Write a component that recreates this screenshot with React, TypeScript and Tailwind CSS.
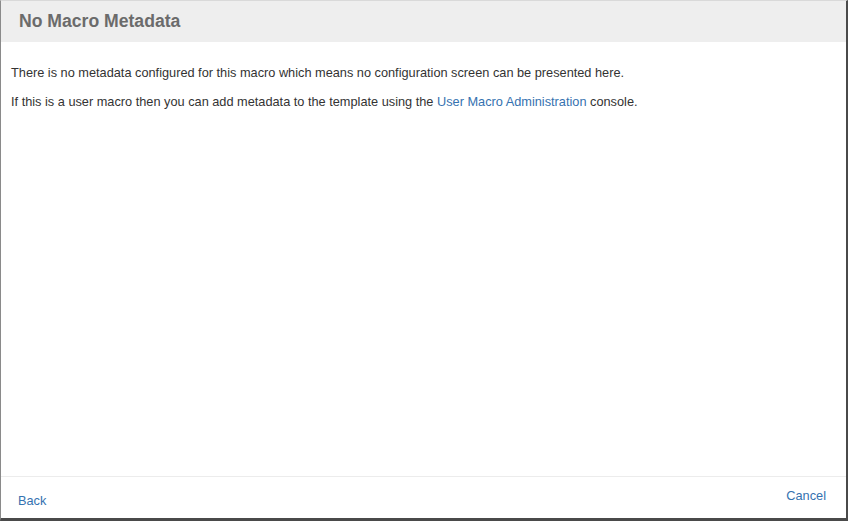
import React from 'react';

const App: React.FC = () => {
  return (
    <div className="w-[848px] h-[521px] bg-white flex flex-col border-t border-t-[#d9d9d9] border-l border-l-[#8a8a8a] border-r-2 border-r-[#4a4a4a] border-b-[3px] border-b-[#4a4a4a] font-['Liberation_Sans',Arial,sans-serif]">
      {/* Header */}
      <div className="h-[41px] shrink-0 bg-[#eeeeee] flex items-center px-[18px]">
        <h2 className="text-[17.6px] font-bold text-[#6b6b6b]">No Macro Metadata</h2>
      </div>

      {/* Body */}
      <div className="flex-1 px-[10px] pt-[23px] text-[12.75px] text-[#333333] leading-[16px]">
        <p>There is no metadata configured for this macro which means no configuration screen can be presented here.</p>
        <p className="mt-[13px]">
          If this is a user macro then you can add metadata to the template using the{' '}
          <a href="#" className="text-[#3572b0]">User Macro Administration</a> console.
        </p>
      </div>

      {/* Footer */}
      <div className="h-[42px] shrink-0 border-t border-t-[#ececec] flex justify-between pl-[17px] pr-[20px] text-[12.75px] text-[#3572b0]">
        <a href="#" className="mt-[14px]">Back</a>
        <a href="#" className="mt-[9px]">Cancel</a>
      </div>
    </div>
  );
};

export default App;
